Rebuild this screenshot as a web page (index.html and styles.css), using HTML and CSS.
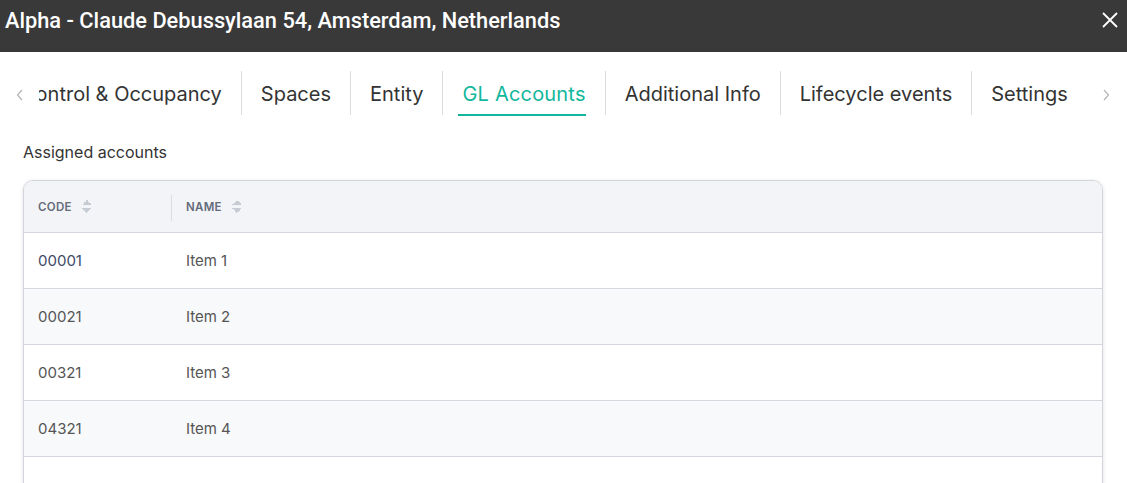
FILE: index.html
```html
<!DOCTYPE html>
<html lang="en">

<head>
    <meta charset="UTF-8">
    <title>GL Accounts</title>
    <link rel="stylesheet" href="styles.css">
</head>

<body>
    <div class="dialog">
        <div class="dialog-header">
            <h1>Alpha - Claude Debussylaan 54, Amsterdam, Netherlands</h1>
            <button class="close" aria-label="Close">
                <svg width="16" height="16" viewBox="0 0 16 16">
                    <path d="M1 1 L15 15 M15 1 L1 15" stroke="#fff" stroke-width="1.8" fill="none"/>
                </svg>
            </button>
        </div>

        <div class="tabs">
            <span class="tab-arrow prev">
                <svg width="8" height="12" viewBox="0 0 8 12"><path d="M6 1 L1.5 6 L6 11" stroke="#b5b5b5" stroke-width="1.2" fill="none"/></svg>
            </span>
            <div class="tab-strip">
                <div class="tab-list">
                    <a class="tab">Control &amp; Occupancy</a>
                    <a class="tab">Spaces</a>
                    <a class="tab">Entity</a>
                    <a class="tab active">GL Accounts</a>
                    <a class="tab">Additional Info</a>
                    <a class="tab">Lifecycle events</a>
                    <a class="tab">Settings</a>
                </div>
            </div>
            <span class="tab-arrow next">
                <svg width="8" height="12" viewBox="0 0 8 12"><path d="M2 1 L6.5 6 L2 11" stroke="#b5b5b5" stroke-width="1.2" fill="none"/></svg>
            </span>
        </div>

        <div class="content">
            <h2>Assigned accounts</h2>
            <div class="table-card">
                <table>
                    <thead>
                        <tr>
                            <th class="col-code"><span class="th-label">Code <i class="sort"></i></span></th>
                            <th><span class="th-label">Name <i class="sort"></i></span></th>
                        </tr>
                    </thead>
                    <tbody>
                        <tr><td class="code">00001</td><td>Item 1</td></tr>
                        <tr><td>00021</td><td>Item 2</td></tr>
                        <tr><td>00321</td><td>Item 3</td></tr>
                        <tr><td>04321</td><td>Item 4</td></tr>
                        <tr><td></td><td></td></tr>
                    </tbody>
                </table>
            </div>
        </div>
    </div>
</body>

</html>
```

FILE: styles.css
```css
body {
    margin: 0;
    padding: 0;
    font-family: Inter, "Noto Sans", sans-serif;
    background-color: #fff;
    overflow: hidden;
}

.dialog-header {
    height: 52px;
    background-color: #393939;
    display: flex;
    align-items: center;
    justify-content: space-between;
    padding: 0 9px 0 5px;
}

.dialog-header h1 {
    margin: 0 0 11px;
    font-family: Roboto, "Liberation Sans", sans-serif;
    font-weight: 500;
    font-size: 21.8px;
    color: #fff;
}

.close {
    background: none;
    border: none;
    padding: 0;
    margin-bottom: 12px;
    cursor: pointer;
    display: flex;
}

.tabs {
    display: flex;
    align-items: center;
    height: 67px;
    margin-top: 7px;
}

.tab-arrow {
    display: flex;
    justify-content: center;
    flex-shrink: 0;
    padding-top: 4px;
}

.tab-arrow.prev {
    width: 39px;
}

.tab-arrow.next {
    width: 30px;
    padding-right: 6px;
}

.tab-strip {
    flex: 1;
    overflow: hidden;
    height: 100%;
}

.tab-list {
    display: flex;
    height: 100%;
    align-items: center;
    margin-left: -37px;
}

.tab {
    position: relative;
    white-space: nowrap;
    padding: 2px 19px 0;
    font-size: 20px;
    color: #333;
    line-height: 42px;
    border-left: 1px solid #dcdcdc;
    cursor: pointer;
}

.tab:first-child {
    border-left: none;
}

.tab.active {
    color: #12b79c;
    letter-spacing: 0.2px;
}

.tab.active::after {
    content: "";
    position: absolute;
    left: 15px;
    right: 19px;
    bottom: -1px;
    height: 2px;
    background-color: #12b79c;
}

.content {
    padding: 0 24px 0 23px;
}

h2 {
    margin: 16px 0 18px;
    font-size: 16px;
    font-weight: 400;
    color: #333;
}

.table-card {
    border: 1px solid #d3d4dc;
    border-radius: 10px;
    overflow: hidden;
    box-shadow: 0 1px 4px rgba(0, 0, 0, 0.12);
}

table {
    width: 100%;
    border-collapse: collapse;
}

th {
    height: 51px;
    background-color: #f3f4f8;
    text-align: left;
    padding: 0 14px;
    font-size: 11.5px;
    font-weight: 600;
    text-transform: uppercase;
    color: #646b79;
    letter-spacing: 0.3px;
}

.col-code {
    width: 120px;
    position: relative;
}

.col-code::after {
    content: "";
    position: absolute;
    right: 0;
    top: 14px;
    bottom: 11px;
    width: 1px;
    background-color: #dcdde3;
}

.th-label {
    display: inline-flex;
    align-items: center;
    gap: 10px;
}

.sort {
    display: inline-block;
    width: 10px;
    height: 16px;
    background:
        linear-gradient(to bottom right, transparent 50%, #c6cbd4 50%) 0 1px / 5px 5px no-repeat,
        linear-gradient(to bottom left, transparent 50%, #c6cbd4 50%) 5px 1px / 5px 5px no-repeat,
        linear-gradient(to top right, transparent 50%, #c6cbd4 50%) 0 9px / 5px 5px no-repeat,
        linear-gradient(to top left, transparent 50%, #c6cbd4 50%) 5px 9px / 5px 5px no-repeat;
}

td {
    height: 55px;
    padding: 0 14px;
    border-top: 1px solid #d5d6de;
    font-size: 15px;
    color: #555;
}

td.code {
    color: #3e4a66;
}

tbody tr:nth-child(even) td {
    background-color: #f8f9fa;
}
```
